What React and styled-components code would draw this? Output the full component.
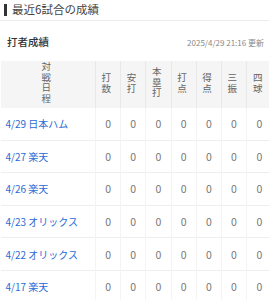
import React from "react";
import styled, { createGlobalStyle } from "styled-components";

const Global = createGlobalStyle`
  html, body { margin: 0; padding: 0; background: #fff; }
  body { font-family: "Noto Sans CJK JP", "Noto Sans", sans-serif; color: #333; }
`;

const Page = styled.div`
  width: 269px;
  height: 300px;
  overflow: hidden;
`;

const SectionTitle = styled.div`
  display: flex;
  align-items: center;
  gap: 5px;
  height: 20px;
  padding: 0 4px;
  border-bottom: 1px solid #ececec;
  font-size: 11.5px;
  color: #444;
  line-height: 1;
  &::before {
    content: "";
    width: 3px;
    height: 12px;
    background: #333;
  }
`;

const SubHeader = styled.div`
  display: flex;
  align-items: center;
  justify-content: space-between;
  height: 40px;
  padding: 0 5px 0 7px;
`;

const SubTitle = styled.div`
  font-size: 10.5px;
  font-weight: 500;
  color: #333;
`;

const Updated = styled.div`
  font-size: 8px;
  color: #888;
  padding-top: 2px;
`;

const Table = styled.table`
  border-collapse: collapse;
  table-layout: fixed;
  width: 271.4px;
`;

const Col = styled.col`
  width: ${(p) => (p.$first ? "95px" : "25.2px")};
`;

const HeadCell = styled.th`
  box-sizing: border-box;
  background: #f5f5f5;
  height: 47px;
  padding: 0 5px 0 0;
  font-weight: 400;
  font-size: 9.5px;
  color: #666;
  vertical-align: middle;
  border-left: 1px solid ${(p) => (p.$first ? "transparent" : "#e8e8e8")};
  position: relative;
  ${(p) => p.$first && `box-shadow: 2px 0 3px rgba(0,0,0,0.12); z-index: 1;`}
`;

const Vertical = styled.span`
  display: inline-block;
  writing-mode: vertical-rl;
  text-orientation: upright;
  line-height: 1;
  letter-spacing: 1px;
`;

const Row = styled.tr`
  border-bottom: 1px solid #eeeeee;
`;

const NameCell = styled.td`
  height: 31.6px;
  padding: 0 0 0 5px;
  font-size: 10px;
  color: #2a6bd6;
  white-space: nowrap;
  position: relative;
  box-shadow: 2px 0 3px rgba(0, 0, 0, 0.12);
  z-index: 1;
  background: #fff;
`;

const ValueCell = styled.td`
  height: 31.6px;
  padding: 0;
  text-align: center;
  font-size: 10.5px;
  color: #777;
  border-left: 1px solid #f4f4f4;
`;

const columns = ["打数", "安打", "本塁打", "打点", "得点", "三振", "四球"];
const games = [
  "4/29 日本ハム",
  "4/27 楽天",
  "4/26 楽天",
  "4/23 オリックス",
  "4/22 オリックス",
  "4/17 楽天",
];

export default function App() {
  return (
    <Page>
      <Global />
      <SectionTitle>最近6試合の成績</SectionTitle>
      <SubHeader>
        <SubTitle>打者成績</SubTitle>
        <Updated>2025/4/29 21:16 更新</Updated>
      </SubHeader>
      <Table>
        <colgroup>
          <Col $first />
          {columns.map((c) => (
            <Col key={c} />
          ))}
        </colgroup>
        <thead>
          <tr>
            <HeadCell $first>
              <Vertical>対戦日程</Vertical>
            </HeadCell>
            {columns.map((c) => (
              <HeadCell key={c}>
                <Vertical>{c}</Vertical>
              </HeadCell>
            ))}
          </tr>
        </thead>
        <tbody>
          {games.map((g) => (
            <Row key={g}>
              <NameCell>{g}</NameCell>
              {columns.map((c) => (
                <ValueCell key={c}>0</ValueCell>
              ))}
            </Row>
          ))}
        </tbody>
      </Table>
    </Page>
  );
}
